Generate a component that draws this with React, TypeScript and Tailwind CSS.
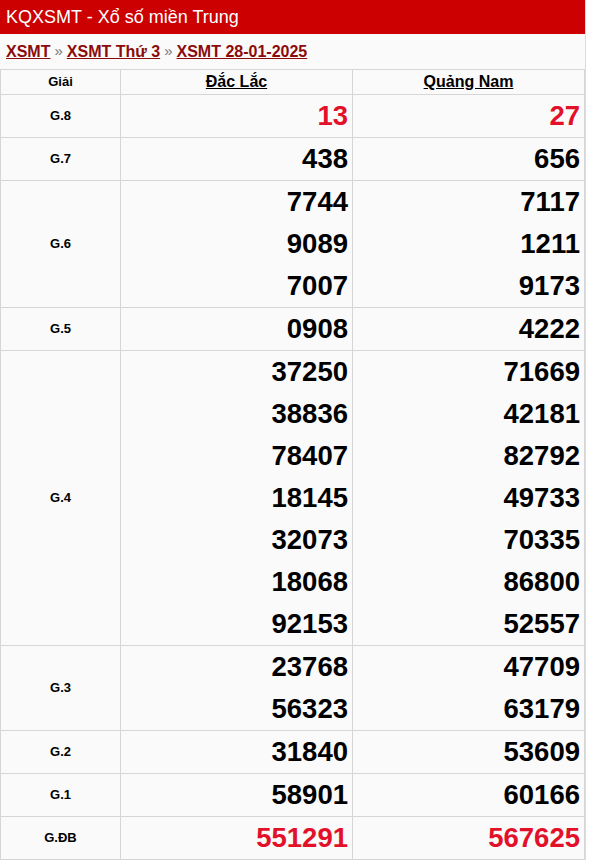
const rows: { label: string; a: string[]; b: string[]; red?: boolean }[] = [
  { label: 'G.8', a: ['13'], b: ['27'], red: true },
  { label: 'G.7', a: ['438'], b: ['656'] },
  { label: 'G.6', a: ['7744', '9089', '7007'], b: ['7117', '1211', '9173'] },
  { label: 'G.5', a: ['0908'], b: ['4222'] },
  {
    label: 'G.4',
    a: ['37250', '38836', '78407', '18145', '32073', '18068', '92153'],
    b: ['71669', '42181', '82792', '49733', '70335', '86800', '52557'],
  },
  { label: 'G.3', a: ['23768', '56323'], b: ['47709', '63179'] },
  { label: 'G.2', a: ['31840'], b: ['53609'] },
  { label: 'G.1', a: ['58901'], b: ['60166'] },
  { label: 'G.ĐB', a: ['551291'], b: ['567625'], red: true },
];

function Nums({ items, red }: { items: string[]; red?: boolean }) {
  return (
    <td className="border border-[#d6d6d6] p-0 pr-[4px] text-right align-top">
      {items.map((n, i) => (
        <div
          key={i}
          className={`h-[42px] leading-[42px] text-[27.5px] font-bold ${red ? 'text-[#e3102a]' : 'text-black'}`}
        >
          {n}
        </div>
      ))}
    </td>
  );
}

export default function App() {
  return (
    <div className="min-h-screen bg-white" style={{ fontFamily: '"Liberation Sans", Arial, sans-serif' }}>
      <div className="w-[586px] bg-[#fafafa] border-r border-[#dcdcdc]">
        {/* Title bar */}
        <div className="h-[34px] bg-[#cc0000] text-white text-[18px] leading-[34px] pl-[6px]">
          KQXSMT - Xổ số miền Trung
        </div>

        {/* Breadcrumb */}
        <div className="h-[35px] flex items-center pl-[6px] text-[16px] font-bold text-[#8b0b0b]">
          <a className="underline">XSMT</a>
          <span className="text-[#777] font-normal text-[15px] mx-[4px]">»</span>
          <a className="underline">XSMT Thứ 3</a>
          <span className="text-[#777] font-normal text-[15px] mx-[4px]">»</span>
          <a className="underline">XSMT 28-01-2025</a>
        </div>

        {/* Results table */}
        <table className="w-full border-collapse table-fixed">
          <colgroup>
            <col className="w-[120px]" />
            <col className="w-[232px]" />
            <col />
          </colgroup>
          <thead>
            <tr className="h-[25px] text-[13px] font-bold text-black">
              <th className="border border-[#d6d6d6] font-bold">Giải</th>
              <th className="border border-[#d6d6d6] font-bold">
                <span className="underline text-[16px]">Đắc Lắc</span>
              </th>
              <th className="border border-[#d6d6d6] font-bold">
                <span className="underline text-[16px]">Quảng Nam</span>
              </th>
            </tr>
          </thead>
          <tbody>
            {rows.map((r) => (
              <tr key={r.label}>
                <td className="border border-[#d6d6d6] text-center text-[13px] font-bold text-black">{r.label}</td>
                <Nums items={r.a} red={r.red} />
                <Nums items={r.b} red={r.red} />
              </tr>
            ))}
          </tbody>
        </table>
      </div>
    </div>
  );
}
